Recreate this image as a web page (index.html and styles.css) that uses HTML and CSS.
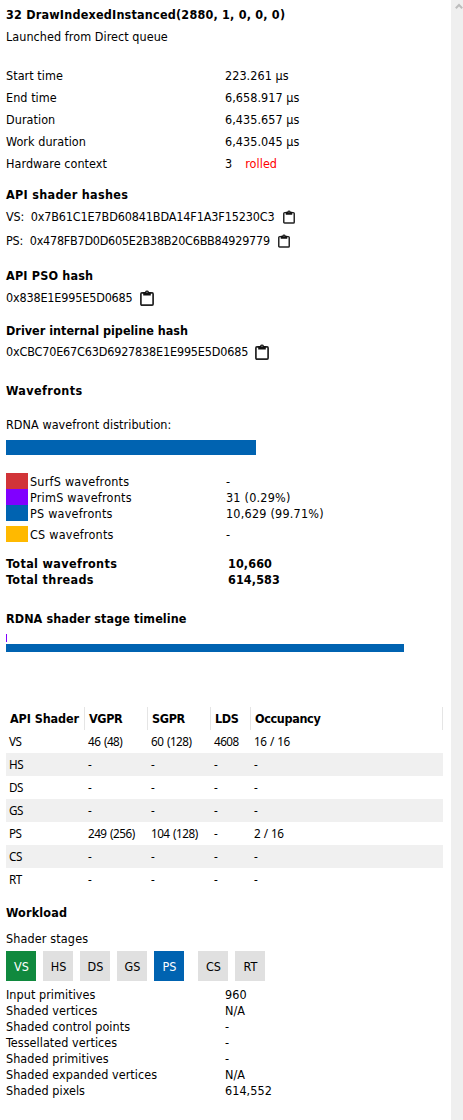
FILE: index.html
```html
<!DOCTYPE html>
<html lang="en">
<head>
<meta charset="utf-8">
<title>Event details</title>
<link rel="stylesheet" href="styles.css">
</head>
<body>
<svg class="defs" aria-hidden="true">
  <symbol id="clip" viewBox="0 0 14 16">
    <rect x=".9" y="2.9" width="12.2" height="12.2" rx="1" fill="none" stroke="#222" stroke-width="1.7"/>
    <path d="M3.2 2H5a2.1 2.1 0 0 1 4 0h1.8v3.5H3.2z" fill="#111"/>
    <circle cx="7" cy="2.2" r=".7" fill="#999"/>
  </symbol>
</svg>
<div class="app">
<main class="pane">
  <h1 class="line title">32 DrawIndexedInstanced(2880, 1, 0, 0, 0)</h1>
  <p class="line queue">Launched from Direct queue</p>

  <dl class="facts timing">
    <dt>Start time</dt><dd>223.261 µs</dd>
    <dt>End time</dt><dd>6,658.917 µs</dd>
    <dt>Duration</dt><dd>6,435.657 µs</dd>
    <dt>Work duration</dt><dd>6,435.045 µs</dd>
    <dt>Hardware context</dt><dd>3<span class="rolled">rolled</span></dd>
  </dl>

  <section class="hashes">
    <h2 class="line">API shader hashes</h2>
    <p class="line hash"><span class="hash-vs">VS: 0x7B61C1E7BD60841BDA14F1A3F15230C3</span><svg class="copy small"><use href="#clip"/></svg></p>
    <p class="line hash second"><span class="hash-ps">PS: 0x478FB7D0D605E2B38B20C6BB84929779</span><svg class="copy small"><use href="#clip"/></svg></p>
  </section>
  <section class="pso">
    <h2 class="line pso-title">API PSO hash</h2>
    <p class="line hash"><span class="hash-pso">0x838E1E995E5D0685</span><svg class="copy"><use href="#clip"/></svg></p>
  </section>
  <section class="driver">
    <h2 class="line driver-title">Driver internal pipeline hash</h2>
    <p class="line hash"><span class="hash-driver">0xCBC70E67C63D6927838E1E995E5D0685</span><svg class="copy"><use href="#clip"/></svg></p>
  </section>

  <section class="wavefronts">
    <h2 class="line">Wavefronts</h2>
    <p class="line dist">RDNA wavefront distribution:</p>
    <div class="dist-bar"></div>
    <div class="legend">
      <div class="key"><i class="swatch red"></i><span class="name">SurfS wavefronts</span><span>-</span></div>
      <div class="key"><i class="swatch purple"></i><span class="name">PrimS wavefronts</span><span>31 (0.29%)</span></div>
      <div class="key"><i class="swatch blue"></i><span class="name">PS wavefronts</span><span>10,629 (99.71%)</span></div>
      <div class="key apart"><i class="swatch amber"></i><span class="name">CS wavefronts</span><span>-</span></div>
    </div>
    <dl class="facts totals">
      <dt>Total wavefronts</dt><dd>10,660</dd>
      <dt>Total threads</dt><dd>614,583</dd>
    </dl>
  </section>

  <section class="timeline">
    <h2 class="line">RDNA shader stage timeline</h2>
    <div class="tick"></div>
    <div class="stage-bar"></div>
  </section>

  <table class="shaders">
    <colgroup><col class="c1"><col class="c2"><col class="c3"><col class="c4"><col class="c5"></colgroup>
    <thead><tr><th>API Shader</th><th>VGPR</th><th>SGPR</th><th>LDS</th><th>Occupancy</th></tr></thead>
    <tbody>
      <tr><td>VS</td><td>46 (48)</td><td>60 (128)</td><td>4608</td><td>16 / 16</td></tr>
      <tr><td>HS</td><td>-</td><td>-</td><td>-</td><td>-</td></tr>
      <tr><td>DS</td><td>-</td><td>-</td><td>-</td><td>-</td></tr>
      <tr><td>GS</td><td>-</td><td>-</td><td>-</td><td>-</td></tr>
      <tr><td>PS</td><td>249 (256)</td><td>104 (128)</td><td>-</td><td>2 / 16</td></tr>
      <tr><td>CS</td><td>-</td><td>-</td><td>-</td><td>-</td></tr>
      <tr><td>RT</td><td>-</td><td>-</td><td>-</td><td>-</td></tr>
    </tbody>
  </table>

  <section class="workload">
    <h2 class="line">Workload</h2>
    <p class="line stages-label">Shader stages</p>
    <div class="stages">
      <span class="stage vs">VS</span><span class="stage">HS</span><span class="stage">DS</span><span class="stage">GS</span><span class="stage ps">PS</span><span class="stage cs">CS</span><span class="stage">RT</span>
    </div>
    <dl class="facts counts">
      <dt>Input primitives</dt><dd>960</dd>
      <dt>Shaded vertices</dt><dd>N/A</dd>
      <dt>Shaded control points</dt><dd>-</dd>
      <dt>Tessellated vertices</dt><dd>-</dd>
      <dt>Shaded primitives</dt><dd>-</dd>
      <dt>Shaded expanded vertices</dt><dd>N/A</dd>
      <dt>Shaded pixels</dt><dd>614,552</dd>
    </dl>
  </section>
</main>
<aside class="scroll"><svg width="8" height="7" viewBox="0 0 8 7"><path d="M.8 5.2 4 2l3.2 3.2" fill="none" stroke="#bdbdbd" stroke-width="2"/></svg></aside>
</div>
</body>
</html>
```
FILE: styles.css
```css
* { box-sizing: border-box; margin: 0; padding: 0; }
body {
  background: #fff;
  color: #000;
  font: 12.5px "DejaVu Sans Condensed", "DejaVu Sans", sans-serif;
  font-stretch: condensed;
  letter-spacing: .05px;
}
.defs { position: absolute; width: 0; height: 0; }
.app { display: flex; height: 1120px; overflow: hidden; }
.pane { flex: 1; padding: 4px 0 0 6px; white-space: nowrap; }
.scroll { width: 12px; background: #efefef; padding: 3px 0 0 4px; line-height: 0; }

.line { height: 22px; line-height: 22px; }
h1, h2 { font-size: 12.5px; font-weight: bold; letter-spacing: .3px; }
.title { letter-spacing: .2px; }

.facts { display: grid; grid-template-columns: 219px 1fr; }
.timing { margin-top: 17px; grid-auto-rows: 22px; line-height: 22px; }
.rolled { color: #f00; margin-left: 13px; }

.hashes { margin-top: 9px; }
.hash { display: flex; align-items: center; gap: 7px; }
.hash.second { height: 24px; margin-top: 1px; }
.hash-vs { letter-spacing: -.13px; word-spacing: 3px; }
.hash-ps { letter-spacing: -.25px; word-spacing: 3.5px; }
.hash-pso, .hash-driver { letter-spacing: -.17px; }
.copy { width: 14px; height: 16px; }
.copy.small { width: 12px; height: 14px; margin-left: 1px; }
.pso { margin-top: 12px; }
.pso-title { letter-spacing: .18px; }
.driver { margin-top: 11px; }
.driver-title { letter-spacing: 0; }
.driver .hash { height: 20px; }

.wavefronts { margin-top: 18px; }
.wavefronts h2 { letter-spacing: .38px; }
.dist { margin-top: 12px; }
.dist-bar { width: 250px; height: 15px; margin-top: 4px; background: #0063b1; }
.legend { margin-top: 18px; letter-spacing: .22px; }
.key { display: flex; height: 16px; line-height: 17px; }
.key.apart { margin-top: 5px; }
.swatch { width: 22px; margin-right: 2px; }
.name { width: 196px; }
.red { background: #d13438; }
.purple { background: #8000ff; }
.blue { background: #0063b1; }
.amber { background: #ffb900; }
.totals { margin-top: 14px; grid-template-columns: 222px 1fr; grid-auto-rows: 16px; line-height: 16px; font-weight: bold; letter-spacing: .35px; }
.totals dd { letter-spacing: .1px; }

.timeline { margin-top: 20px; }
.timeline h2 { letter-spacing: .07px; }
.tick { width: 1px; height: 8px; margin-top: 4px; background: #8000ff; }
.stage-bar { width: 398px; height: 8px; margin-top: 2px; background: #0063b1; }

.shaders { width: 437px; margin-top: 55px; border-collapse: separate; border-spacing: 0; table-layout: fixed; }
.c1 { width: 79px; }
.c2, .c3 { width: 63px; }
.c4 { width: 40px; }
.shaders th { height: 23px; padding-left: 4px; text-align: left; line-height: 23px; letter-spacing: -.35px; border-right: 1px solid #e5e5e5; }
.shaders th:first-child { letter-spacing: -.1px; }
.shaders td { height: 23px; padding-left: 3px; line-height: 23px; font-family: "Noto Sans", sans-serif; font-size: 11.7px; letter-spacing: -.5px; word-spacing: 1px; }
.shaders tbody tr:nth-child(even) { background: #f0f0f0; }

.workload { margin-top: 11px; }
.workload h2 { letter-spacing: .15px; }
.stages-label { margin-top: 4px; letter-spacing: .13px; }
.stages { display: flex; gap: 7px; margin-top: 1px; }
.stage { width: 30px; height: 30px; padding-left: 1px; line-height: 31px; text-align: center; background: #e0e0e0; }
.stage.vs { background: #10893e; color: #fff; }
.stage.ps { background: #0063b1; color: #fff; }
.stage.cs { margin-left: 7px; }
.counts { margin-top: 6px; grid-auto-rows: 16px; line-height: 16px; }
```
